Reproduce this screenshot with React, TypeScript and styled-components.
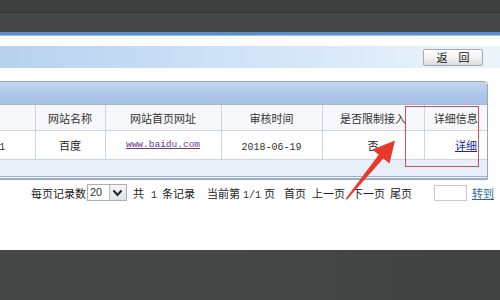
import styled, { createGlobalStyle } from "styled-components";

const GlobalStyle = createGlobalStyle`
  html, body {
    margin: 0;
    padding: 0;
    background: #ffffff;
  }
  body {
    font-family: "Noto Sans CJK SC", "DejaVu Sans", sans-serif;
    font-size: 11px;
    color: #222222;
  }
`;

const columns = [
  { title: "", width: 65 },
  { title: "网站名称", width: 70 },
  { title: "网站首页网址", width: 116 },
  { title: "审核时间", width: 101 },
  { title: "是否限制接入", width: 102 },
  { title: "详细信息", width: 63 },
];

const App = () => {
  return (
    <Page>
      <GlobalStyle />
      <TopFrame />
      <BlueLine />
      <Content>
        <Toolbar>
          <BackButton>返　回</BackButton>
        </Toolbar>
        <TableBox>
          <TitleBar />
          <Grid>
            <colgroup>
              {columns.map((c, i) => (
                <col key={i} style={{ width: c.width }} />
              ))}
            </colgroup>
            <thead>
              <tr>
                {columns.map((c, i) => (
                  <Th key={i}>{c.title}</Th>
                ))}
              </tr>
            </thead>
            <tbody>
              <tr>
                <Td>
                  <Mono>1</Mono>
                </Td>
                <Td>百度</Td>
                <Td $top>
                  <UrlLink>www.baidu.com</UrlLink>
                </Td>
                <Td>
                  <Mono>2018-06-19</Mono>
                </Td>
                <Td>否</Td>
                <Td $right>
                  <DetailLink>详细</DetailLink>
                </Td>
              </tr>
              <tr>
                <EmptyCell colSpan={6} />
              </tr>
            </tbody>
          </Grid>
        </TableBox>
        <Pager>
          <span>每页记录数</span>
          <FakeSelect>
            <SelectValue>20</SelectValue>
            <SelectButton>
              <svg width="11" height="8" viewBox="0 0 11 8">
                <path d="M1.5 1.5 L5.5 6 L9.5 1.5" fill="none" stroke="#222" strokeWidth="2" />
              </svg>
            </SelectButton>
          </FakeSelect>
          <Gap $w={6}>共</Gap>
          <Gap $w={7}>
            <Mono>1</Mono>
          </Gap>
          <Gap $w={5}>条记录</Gap>
          <Gap $w={12}>当前第</Gap>
          <Gap $w={3}>
            <Mono>1/1</Mono>
          </Gap>
          <Gap $w={3}>页</Gap>
          <Gap $w={9}>首页</Gap>
          <Gap $w={6}>上一页</Gap>
          <Gap $w={7}>下一页</Gap>
          <Gap $w={5}>尾页</Gap>
          <PageInput />
          <GoLink>转到</GoLink>
        </Pager>
      </Content>
      <BottomFrame />
      <Marker />
      <Arrow width="500" height="300" viewBox="0 0 500 300">
        <polygon
          points="345.5,199 378.7,154.7 372.5,149.6 395,140.5 389.5,163.6 383.3,158.5 347,199.5"
          fill="#e8392b"
        />
      </Arrow>
    </Page>
  );
};

const Page = styled.div`
  position: relative;
  width: 500px;
  height: 300px;
  overflow: hidden;
  display: flex;
  flex-direction: column;
`;

const TopFrame = styled.div`
  height: 32px;
  background: linear-gradient(
    to bottom,
    #3f4040 0px,
    #3f4040 12px,
    #303131 12px,
    #303131 13px,
    #464748 13px,
    #444546 32px
  );
`;

const BlueLine = styled.div`
  height: 3px;
  background: #5c8fcb;
  border-bottom: 1px solid #9cc0e6;
`;

const Content = styled.div`
  flex: 1;
  display: flex;
  flex-direction: column;
  background: #ffffff;
  padding-top: 10px;
`;

const Toolbar = styled.div`
  height: 22px;
  display: flex;
  align-items: center;
  justify-content: flex-end;
  padding-right: 17px;
  background: linear-gradient(to right, #b7d1ee 0%, #cfe2f6 45%, #edf5fc 100%);
`;

const BackButton = styled.button`
  width: 60px;
  height: 17px;
  padding: 0;
  font-family: "Noto Sans CJK SC", sans-serif;
  font-size: 11px;
  line-height: 15px;
  color: #111111;
  border: 1px solid #a7a9ac;
  border-radius: 2px;
  background: linear-gradient(to bottom, #ffffff 0%, #f2f2f2 50%, #dcdcdc 100%);
`;

const TableBox = styled.div`
  margin: 13px 12px 0 -31px;
  border: 1px solid #93a6bd;
  border-radius: 0 4px 0 0;
  overflow: hidden;
`;

const TitleBar = styled.div`
  height: 22px;
  background: linear-gradient(to bottom, #c4d7f1 0%, #aec7e9 50%, #a7c1e6 100%);
  border-bottom: 1px solid #a8b8cc;
`;

const Grid = styled.table`
  width: 100%;
  table-layout: fixed;
  border-collapse: collapse;
`;

const Th = styled.th`
  height: 25px;
  padding: 0;
  font-weight: normal;
  font-size: 11px;
  color: #333333;
  background: #f6f8fb;
  border-right: 1px solid #cdd4dc;
  border-bottom: 1px solid #cdd4dc;
  text-align: center;
  &:last-child {
    border-right: none;
  }
`;

const Td = styled.td<{ $top?: boolean; $right?: boolean }>`
  height: 25px;
  padding: ${(p) => (p.$top ? "3px 0 0 0" : p.$right ? "0 10px 0 0" : "0")};
  vertical-align: ${(p) => (p.$top ? "top" : "middle")};
  text-align: ${(p) => (p.$right ? "right" : "center")};
  font-size: 11px;
  color: #222222;
  background: #ffffff;
  border-right: 1px solid #cdd4dc;
  border-bottom: 1px solid #cdd4dc;
  &:last-child {
    border-right: none;
  }
`;

const EmptyCell = styled.td`
  height: 16px;
  padding: 0;
  background: #e8eff8;
  border-bottom: 3px double #a3b2c4;
`;

const Mono = styled.span`
  font-family: "Liberation Mono", "DejaVu Sans Mono", monospace;
  font-size: 10px;
  color: #333333;
`;

const UrlLink = styled.a`
  font-family: "Liberation Mono", "DejaVu Sans Mono", monospace;
  font-size: 9.5px;
  color: #6a3d8c;
  text-decoration: underline;
`;

const DetailLink = styled.a`
  color: #1a2a9a;
  text-decoration: underline;
  font-size: 11px;
`;

const Pager = styled.div`
  display: flex;
  align-items: center;
  justify-content: flex-end;
  height: 17px;
  margin-top: 4px;
  padding-right: 6px;
  font-size: 11px;
  color: #222222;
  white-space: nowrap;
`;

const Gap = styled.span<{ $w: number }>`
  margin-left: ${(p) => p.$w}px;
`;

const FakeSelect = styled.div`
  display: flex;
  align-items: stretch;
  width: 40px;
  height: 17px;
  margin-left: 1px;
  border: 1px solid #a9b0b8;
  box-sizing: border-box;
  background: #ffffff;
`;

const SelectValue = styled.span`
  flex: 1;
  font-family: "Liberation Sans", sans-serif;
  font-size: 11px;
  line-height: 15px;
  padding-left: 2px;
  color: #333333;
`;

const SelectButton = styled.span`
  width: 16px;
  display: flex;
  align-items: center;
  justify-content: center;
  background: linear-gradient(to bottom, #f3f4f6, #dfe3e8);
  border-left: 1px solid #b8bec6;
`;

const PageInput = styled.span`
  width: 33px;
  height: 16px;
  margin-left: 22px;
  border: 1px solid #c7c9cc;
  box-sizing: border-box;
  background: #ffffff;
`;

const GoLink = styled.a`
  margin-left: 5px;
  color: #2a6aa8;
  text-decoration: underline;
`;

const BottomFrame = styled.div`
  height: 50px;
  background: linear-gradient(to right, #454646 0%, #444545 60%, #414242 100%);
`;

const Marker = styled.div`
  position: absolute;
  left: 405px;
  top: 106px;
  width: 74px;
  height: 61px;
  border: 1px solid #c45266;
  box-sizing: border-box;
  pointer-events: none;
`;

const Arrow = styled.svg`
  position: absolute;
  left: 0;
  top: 0;
  pointer-events: none;
`;

export default App;
